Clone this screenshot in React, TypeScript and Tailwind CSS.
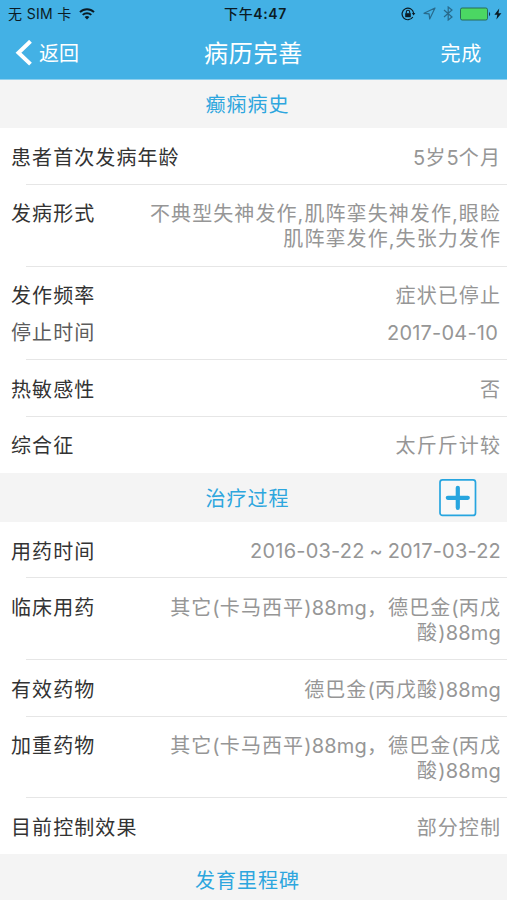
import type { ReactNode } from "react";

type Line = { label: string; value: string; sub?: boolean; raised?: boolean };

function Section({ title, className, titleClass, children }: { title: string; className: string; titleClass: string; children?: ReactNode }) {
  return (
    <div className={`flex shrink-0 items-center bg-[#f4f4f4] ${className}`}>
      <div className="w-[120px]" />
      <h2 className={`flex-1 text-center text-[20px] leading-[25px] tracking-[1.05px] text-[#2da6de] ${titleClass}`}>{title}</h2>
      <div className="flex w-[132px] pl-[64px]">{children}</div>
    </div>
  );
}

// Digits and Latin letters are set tighter than the Chinese glyphs around them.
function Value({ text }: { text: string }) {
  return (
    <>
      {text.split("\n").map((line) => (
        <div key={line} className="whitespace-nowrap">
          {line.split(/([0-9a-z~() -]+)/).map((part, i) =>
            i % 2 ? (
              <span key={i} className="tracking-[0.2px] [word-spacing:-1px]">
                {part}
              </span>
            ) : (
              part
            ),
          )}
        </div>
      ))}
    </>
  );
}

function Row({ lines, height, last }: { lines: Line[]; height: string; last?: boolean }) {
  return (
    <div className={`relative shrink-0 bg-white pl-[11px] pr-[6px] ${height}`}>
      <div className="flex flex-col gap-[12px]">
        {lines.map((l) => (
          <div key={l.label} className="flex justify-between text-[20px] leading-[25px] tracking-[1.08px]">
            <span className={`whitespace-nowrap ${l.sub ? "text-[#5c5c5c]" : "text-[#333333]"}`}>{l.label}</span>
            <div className={`text-right text-[#969696] ${l.sub ? "pr-[3px]" : ""} ${l.raised ? "-mt-px" : ""}`}>
              <Value text={l.value} />
            </div>
          </div>
        ))}
      </div>
      {!last && <div className="absolute bottom-0 left-[26px] right-0 h-px bg-[#e6e6e6]" />}
    </div>
  );
}

function StatusBar() {
  return (
    <div className="flex h-[27px] items-center pl-[8px] pr-[5px] text-[14px] text-[#0b1b24]">
      <div className="flex w-[190px] items-center gap-[7px]">
        <span className="whitespace-nowrap tracking-[0.35px]">无 SIM 卡</span>
        <svg width="16" height="12" viewBox="0 0 16 12" fill="none" stroke="currentColor" strokeWidth="2">
          <path d="M1 4.1a10 10 0 0 1 14 0M3.7 6.9a6.2 6.2 0 0 1 8.6 0" />
          <path d="M5.6 9.1a3.4 3.4 0 0 1 4.8 0L8 11.5z" fill="currentColor" stroke="none" />
        </svg>
      </div>
      <div className="flex-1 pl-[1px] text-center text-[14px] font-semibold tracking-[0.6px]">
        <span className="font-medium">下午</span>4:47
      </div>
      <div className="flex w-[190px] items-center justify-end">
        <svg width="15" height="14" viewBox="0 0 15 14" fill="none" stroke="currentColor">
          <path d="M11.8 10A5.8 5.8 0 1 1 12.6 6" strokeWidth="1.2" />
          <path d="M10.9 6h3.4l-1.7 2.5z" fill="currentColor" stroke="none" />
          <rect x="4.2" y="6.2" width="5.6" height="4" fill="currentColor" stroke="none" />
          <path d="M5.3 6.5V5a1.7 1.7 0 0 1 3.4 0v1.5" strokeWidth="1.1" />
        </svg>
        <svg className="ml-[7px] text-[#286a8c]" width="13" height="13" viewBox="0 0 13 13" fill="none" stroke="currentColor" strokeWidth="1.2">
          <path d="M12 1 1 6.3l5.1.6.6 5.1z" strokeLinejoin="round" />
        </svg>
        <svg className="ml-[7px] text-[#286a8c]" width="11" height="15" viewBox="0 0 11 15" fill="none" stroke="currentColor" strokeWidth="1.2">
          <path d="m1 4 8 7-3.8 3V1L9 4l-8 7" />
        </svg>
        <svg className="ml-[6px]" width="32" height="14" viewBox="0 0 32 14">
          <rect x="0.5" y="1" width="27" height="12" rx="1.7" fill="#4bd763" stroke="#286d58" strokeWidth="1" />
          <path d="M29 4.7q2.4 2.3 0 4.6z" fill="#123848" />
        </svg>
        <svg className="ml-[2px]" width="8" height="12" viewBox="0 0 8 12" fill="currentColor">
          <path d="M5.2.5.4 6.7h2.9l-.9 4.9 5-6.4H4.5z" />
        </svg>
      </div>
    </div>
  );
}

export default function App() {
  return (
    <div className="flex h-[900px] w-[507px] flex-col overflow-hidden bg-white font-['Inter','Noto_Sans_CJK_SC',sans-serif]">
      <header className="h-[80px] shrink-0 border-b border-[#8fd0ee] bg-[#43b1e5]">
        <StatusBar />
        <div className="flex h-[52px] items-center pl-[15px] pr-[25px] text-white">
          <button className="flex w-[110px] items-center gap-[6px] text-[20px]">
            <svg width="18" height="26" viewBox="0 0 18 26" fill="none" stroke="white" strokeWidth="4">
              <path d="M15.5 1.3 3.5 12.7l12 11.4" />
            </svg>
            <span className="pt-[2px]">返回</span>
          </button>
          <h1 className="flex-1 pt-[1px] text-center text-[24px] tracking-[0.7px]">病历完善</h1>
          <button className="w-[100px] pt-[2px] text-right text-[20px] tracking-[0.7px]">完成</button>
        </div>
      </header>

      <Section title="癫痫病史" className="h-[48px]" titleClass="pt-[2px]" />
      <Row height="h-[57px] pt-[18px]" lines={[{ label: "患者首次发病年龄", value: "5岁5个月" }]} />
      <Row height="h-[82px] pt-[17px]" lines={[{ label: "发病形式", value: "不典型失神发作,肌阵挛失神发作,眼睑\n肌阵挛发作,失张力发作" }]} />
      <Row
        height="h-[93px] pt-[17px]"
        lines={[
          { label: "发作频率", value: "症状已停止" },
          { label: "停止时间", value: "2017-04-10", sub: true },
        ]}
      />
      <Row height="h-[57px] pt-[18px]" lines={[{ label: "热敏感性", value: "否" }]} />
      <Row height="h-[56px] pt-[17px]" lines={[{ label: "综合征", value: "太斤斤计较" }]} last />

      <Section title="治疗过程" className="h-[49px]" titleClass="pt-[3px]">
        <button aria-label="添加">
          <svg width="38" height="38" viewBox="0 0 38 38" fill="none" stroke="#27a5df">
            <rect x="1" y="0.9" width="35.5" height="35.5" rx="2.5" strokeWidth="1.7" fill="#f8f8f8" />
            <path d="M18.8 8.8v20M8.8 18.8h20" strokeWidth="4.2" strokeLinecap="round" />
          </svg>
        </button>
      </Section>
      <Row height="h-[56px] pt-[18px]" lines={[{ label: "用药时间", value: "2016-03-22 ~ 2017-03-22", raised: true }]} />
      <Row height="h-[82px] pt-[18px]" lines={[{ label: "临床用药", value: "其它(卡马西平)88mg，德巴金(丙戊\n酸)88mg" }]} />
      <Row height="h-[57px] pt-[18px]" lines={[{ label: "有效药物", value: "德巴金(丙戊酸)88mg" }]} />
      <Row height="h-[81px] pt-[17px]" lines={[{ label: "加重药物", value: "其它(卡马西平)88mg，德巴金(丙戊\n酸)88mg" }]} />
      <Row height="h-[56px] pt-[18px]" lines={[{ label: "目前控制效果", value: "部分控制" }]} last />

      <Section title="发育里程碑" className="h-[49px]" titleClass="pt-[5px]" />
    </div>
  );
}
